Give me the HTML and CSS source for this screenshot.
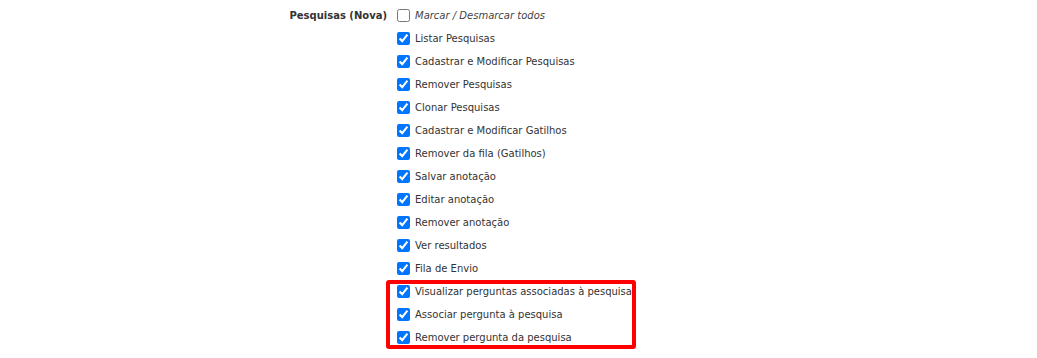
FILE: index.html
```html
<!DOCTYPE html>
<html lang="pt-BR">
<head>
    <meta charset="UTF-8">
    <meta name="viewport" content="width=device-width, initial-scale=1.0">
    <title>Permissões</title>
    <link rel="stylesheet" href="styles.css">
</head>
<body>

    <div class="perm-row">
        <div class="perm-label">Pesquisas (Nova)</div>
        <div class="perm-options">
            <label class="opt toggle-all"><input type="checkbox"> <em>Marcar / Desmarcar todos</em></label>
            <label class="opt"><input type="checkbox" checked> Listar Pesquisas</label>
            <label class="opt"><input type="checkbox" checked> Cadastrar e Modificar Pesquisas</label>
            <label class="opt"><input type="checkbox" checked> Remover Pesquisas</label>
            <label class="opt"><input type="checkbox" checked> Clonar Pesquisas</label>
            <label class="opt"><input type="checkbox" checked> Cadastrar e Modificar Gatilhos</label>
            <label class="opt"><input type="checkbox" checked> Remover da fila (Gatilhos)</label>
            <label class="opt"><input type="checkbox" checked> Salvar anotação</label>
            <label class="opt"><input type="checkbox" checked> Editar anotação</label>
            <label class="opt"><input type="checkbox" checked> Remover anotação</label>
            <label class="opt"><input type="checkbox" checked> Ver resultados</label>
            <label class="opt"><input type="checkbox" checked> Fila de Envio</label>

            <!-- new permissions, highlighted -->
            <div class="highlight">
                <label class="opt"><input type="checkbox" checked> Visualizar perguntas associadas à pesquisa</label>
                <label class="opt"><input type="checkbox" checked> Associar pergunta à pesquisa</label>
                <label class="opt"><input type="checkbox" checked> Remover pergunta da pesquisa</label>
            </div>
        </div>
    </div>

</body>
</html>
```

FILE: styles.css
```css
body {
    font-family: "DejaVu Sans", Verdana, sans-serif;
    font-size: 10px;
    color: #333;
    background: white;
    margin: 0;
}
.perm-row {
    display: flex;
    align-items: flex-start;
}
.perm-label {
    width: 387px;
    text-align: right;
    font-weight: bold;
    line-height: 23px;
    padding-top: 4px;
}
.perm-options {
    padding-top: 4px;
}
.opt {
    display: flex;
    align-items: center;
    height: 23px;
}
.opt input {
    width: 13px;
    height: 13px;
    margin: 0 5px 0 10px;
}
.toggle-all em {
    color: #444;
}
/* red annotation box around the new items */
.highlight {
    position: relative;
}
.highlight::after {
    content: "";
    position: absolute;
    top: 0;
    bottom: 0;
    left: -1px;
    width: 250px;
    border: 4px solid #ff0000;
    border-radius: 3px;
    box-sizing: border-box;
    pointer-events: none;
}
```
